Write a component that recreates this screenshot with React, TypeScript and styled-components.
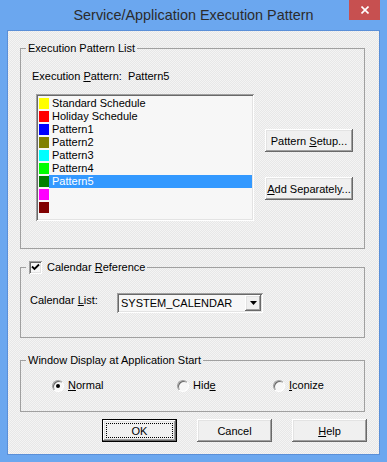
import styled, { createGlobalStyle, css } from "styled-components";

const GlobalStyle = createGlobalStyle`
  html, body {
    margin: 0;
    padding: 0;
  }
  body {
    font-family: "Liberation Sans", Arial, sans-serif;
    font-size: 11px;
    color: #000;
  }
`;

const dither = css`
  background: repeating-conic-gradient(#f4f4f4 0% 25%, #e7e7e7 0% 50%) 0 0 / 2px 2px;
`;

const sunken = css`
  box-shadow: inset 1px 1px #a0a0a0, inset -1px -1px #ffffff, inset 2px 2px #696969,
    inset -2px -2px #e3e3e3;
`;

const raised = css`
  box-shadow: inset -1px -1px #696969, inset 1px 1px #ffffff, inset -2px -2px #a0a0a0,
    inset 2px 2px #e3e3e3;
`;

const Window = styled.div`
  width: 387px;
  height: 462px;
  background: #6ba7ef;
  display: flex;
  flex-direction: column;
`;

const TitleBar = styled.div`
  height: 30px;
  display: grid;
  grid-template-columns: 1fr auto 1fr;
`;

const Title = styled.div`
  font-family: "Liberation Sans", Arial, sans-serif;
  font-size: 14.4px;
  line-height: 30px;
  color: #2b2b2b;
  white-space: nowrap;
`;

const CloseButton = styled.div`
  justify-self: end;
  width: 31px;
  height: 20px;
  margin-right: 7px;
  background: #c75050;
  display: flex;
  align-items: center;
  justify-content: center;
`;

const Client = styled.div`
  flex: 1;
  margin: 0 7px 7px 7px;
  border: 1px solid #5a8fd8;
  ${dither};
  padding: 11px 14px 0 12px;
  display: flex;
  flex-direction: column;
`;

const GroupBox = styled.fieldset<{ $height: number; $top?: number }>`
  margin: ${({ $top }) => $top ?? 0}px 0 0 0;
  padding: 0;
  border: 1px solid #a0a0a0;
  height: ${({ $height }) => $height}px;
  box-sizing: border-box;
  min-width: 0;
`;

const Legend = styled.legend`
  margin-left: 5px;
  padding: 0 2px;
  line-height: 13px;
  display: flex;
  align-items: center;
  gap: 5px;
`;

const Key = styled.span`
  text-decoration: underline;
`;

const PatternLine = styled.div`
  margin: 15px 0 0 11px;
  line-height: 13px;
  display: flex;
  gap: 6px;
`;

const ListRow = styled.div`
  display: flex;
  margin: 11px 0 0 15px;
  gap: 11px;
`;

const ListBox = styled.div`
  width: 218px;
  height: 127px;
  box-sizing: border-box;
  padding: 3px 2px 0 3px;
  background: #f7f7f7;
  ${sunken};
`;

const ListItem = styled.div`
  display: flex;
  height: 13px;
  line-height: 13px;
`;

const Swatch = styled.div<{ $color: string }>`
  width: 10px;
  height: 11px;
  margin-top: 1px;
  background: ${({ $color }) => $color};
`;

const ItemLabel = styled.div<{ $selected?: boolean }>`
  flex: 1;
  padding-left: 3px;
  white-space: nowrap;
  ${({ $selected }) =>
    $selected &&
    css`
      background: #3399ff;
      color: #fff;
    `}
`;

const SideButtons = styled.div`
  display: flex;
  flex-direction: column;
  gap: 25px;
  margin-top: 35px;
`;

const Button = styled.button<{ $width: number; $default?: boolean }>`
  width: ${({ $width }) => $width}px;
  height: 23px;
  padding: 0;
  margin: 0;
  border: none;
  background: #f0f0f0;
  font-family: "Liberation Sans", Arial, sans-serif;
  font-size: 11px;
  color: #000;
  box-sizing: border-box;
  display: flex;
  align-items: center;
  justify-content: center;
  ${raised};
  ${({ $default }) =>
    $default &&
    css`
      border: 1px solid #000;
      padding: 3px;
    `}
`;

const FocusRect = styled.span`
  flex: 1;
  align-self: stretch;
  display: flex;
  align-items: center;
  justify-content: center;
  border: 1px dotted #000;
`;

const CheckBox = styled.span`
  width: 13px;
  height: 13px;
  margin-left: 1px;
  background: #f7f7f7;
  ${sunken};
  display: flex;
  align-items: center;
  justify-content: center;
`;

const CalendarRow = styled.div`
  display: flex;
  margin: 19px 0 0 9px;
`;

const FieldLabel = styled.div`
  width: 87px;
  padding-top: 1px;
  line-height: 13px;
`;

const Combo = styled.div`
  width: 146px;
  height: 20px;
  box-sizing: border-box;
  padding: 2px;
  background: #f7f7f7;
  ${sunken};
  display: flex;
  align-items: center;
`;

const ComboText = styled.div`
  flex: 1;
  padding-left: 2px;
`;

const ComboArrow = styled.div`
  width: 16px;
  height: 16px;
  background: #f0f0f0;
  ${raised};
  display: flex;
  align-items: center;
  justify-content: center;
`;

const RadioRow = styled.div`
  display: grid;
  grid-template-columns: 125px 96px auto;
  margin-top: 12px;
  padding-left: 31px;
  line-height: 13px;
`;

const RadioItem = styled.label`
  display: flex;
  align-items: center;
  gap: 4px;
`;

const RadioCircle = styled.span<{ $checked?: boolean }>`
  position: relative;
  width: 12px;
  height: 12px;
  box-sizing: border-box;
  border-radius: 50%;
  border: 1px solid;
  border-color: #a0a0a0 #ffffff #ffffff #a0a0a0;
  box-shadow: inset 1px 1px #696969;
  background: #f7f7f7;
  ${({ $checked }) =>
    $checked &&
    css`
      &::after {
        content: "";
        position: absolute;
        left: 3px;
        top: 3px;
        width: 4px;
        height: 4px;
        border-radius: 50%;
        background: #000;
      }
    `}
`;

const ButtonRow = styled.div`
  display: flex;
  justify-content: flex-end;
  gap: 20px;
  margin: 7px -2px 0 0;
`;

const patterns = [
  { color: "#ffff00", label: "Standard Schedule" },
  { color: "#ff0000", label: "Holiday Schedule" },
  { color: "#0000ff", label: "Pattern1" },
  { color: "#808000", label: "Pattern2" },
  { color: "#00ffff", label: "Pattern3" },
  { color: "#00ff00", label: "Pattern4" },
  { color: "#008000", label: "Pattern5", selected: true },
  { color: "#ff00ff", label: "" },
  { color: "#800000", label: "" },
];

export default function App() {
  return (
    <>
      <GlobalStyle />
      <Window>
        <TitleBar>
          <div />
          <Title>Service/Application Execution Pattern</Title>
          <CloseButton>
            <svg width="8" height="8" viewBox="0 0 8 8">
              <path d="M0.5 0.5 L7.5 7.5 M7.5 0.5 L0.5 7.5" stroke="#fff" strokeWidth="1.6" />
            </svg>
          </CloseButton>
        </TitleBar>
        <Client>
          <GroupBox $height={207}>
            <Legend>Execution Pattern List</Legend>
            <PatternLine>
              <span>
                Execution <Key>P</Key>attern:
              </span>
              <span>Pattern5</span>
            </PatternLine>
            <ListRow>
              <ListBox>
                {patterns.map((p, i) => (
                  <ListItem key={i}>
                    <Swatch $color={p.color} />
                    <ItemLabel $selected={p.selected}>{p.label}</ItemLabel>
                  </ListItem>
                ))}
              </ListBox>
              <SideButtons>
                <Button $width={88}>
                  Pattern&nbsp;<Key>S</Key>etup...
                </Button>
                <Button $width={88}>
                  <Key>A</Key>dd Separately...
                </Button>
              </SideButtons>
            </ListRow>
          </GroupBox>

          <GroupBox $height={77} $top={12}>
            <Legend>
              <CheckBox>
                <svg width="9" height="9" viewBox="0 0 9 9">
                  <path d="M1 3.5 L3.5 6 L8 1.5" fill="none" stroke="#000" strokeWidth="1.8" />
                </svg>
              </CheckBox>
              <span>
                Calendar <Key>R</Key>eference
              </span>
            </Legend>
            <CalendarRow>
              <FieldLabel>
                Calendar <Key>L</Key>ist:
              </FieldLabel>
              <Combo>
                <ComboText>SYSTEM_CALENDAR</ComboText>
                <ComboArrow>
                  <svg width="7" height="4" viewBox="0 0 7 4">
                    <path d="M0 0 H7 L3.5 4 Z" fill="#000" />
                  </svg>
                </ComboArrow>
              </Combo>
            </CalendarRow>
          </GroupBox>

          <GroupBox $height={58} $top={16}>
            <Legend>Window Display at Application Start</Legend>
            <RadioRow>
              <RadioItem>
                <RadioCircle $checked />
                <span>
                  <Key>N</Key>ormal
                </span>
              </RadioItem>
              <RadioItem>
                <RadioCircle />
                <span>
                  Hid<Key>e</Key>
                </span>
              </RadioItem>
              <RadioItem>
                <RadioCircle />
                <span>
                  <Key>I</Key>conize
                </span>
              </RadioItem>
            </RadioRow>
          </GroupBox>

          <ButtonRow>
            <Button $width={75} $default>
              <FocusRect>OK</FocusRect>
            </Button>
            <Button $width={75}>Cancel</Button>
            <Button $width={75}>
              <Key>H</Key>elp
            </Button>
          </ButtonRow>
        </Client>
      </Window>
    </>
  );
}
